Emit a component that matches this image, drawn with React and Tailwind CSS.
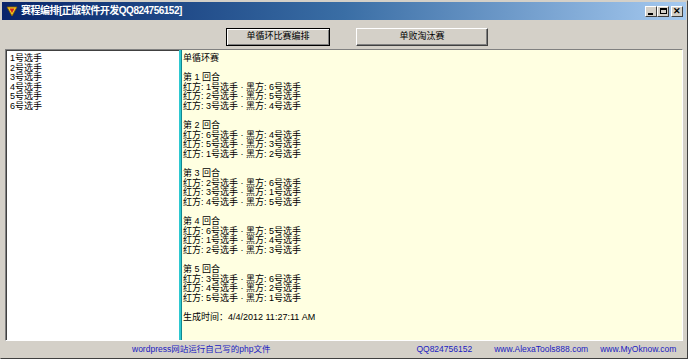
import React from 'react';

const font = { fontFamily: '"Liberation Sans", "Noto Sans CJK SC", sans-serif' };

const players = ['1号选手', '2号选手', '3号选手', '4号选手', '5号选手', '6号选手'];

const rounds = [
  [[1, 6], [2, 5], [3, 4]],
  [[6, 4], [5, 3], [1, 2]],
  [[2, 6], [3, 1], [4, 5]],
  [[6, 5], [1, 4], [2, 3]],
  [[3, 6], [4, 2], [5, 1]],
];

function CapButton({ children }) {
  return (
    <div className="w-[12px] h-[11px] bg-[#d4d0c8] border-t border-l border-white border-r border-b border-r-[#404040] border-b-[#404040] flex items-center justify-center">
      {children}
    </div>
  );
}

function App() {
  return (
    <div className="w-[688px] h-[359px] bg-[#d4d0c8] border border-[#404040] border-t-[#d4d0c8] border-l-[#d4d0c8] flex flex-col overflow-hidden" style={font}>
      {/* 标题栏 */}
      <div className="h-[18px] mx-[1px] mt-[1px] bg-gradient-to-r from-[#0a246a] via-[#3a6ea5] to-[#a6caf0] flex items-center pl-[4px] pr-[3px]">
        <svg width="12" height="12" viewBox="0 0 12 12">
          <path d="M1 2 L11 2 L6 11 Z" fill="#f5d020" stroke="#8a5a00" strokeWidth="0.8" />
          <path d="M3.5 3.5 L8.5 3.5 L6 8 Z" fill="#d02020" />
        </svg>
        <span className="ml-[3px] text-white font-bold text-[10px] leading-none tracking-[-0.5px]">赛程编排[正版软件开发QQ824756152]</span>
        <div className="flex-1" />
        <div className="flex">
          <CapButton>
            <div className="w-[5px] h-[2px] bg-black mt-[5px] -ml-[1px]" />
          </CapButton>
          <CapButton>
            <div className="w-[7px] h-[6px] border border-black border-t-2" />
          </CapButton>
          <div className="ml-[2px]">
            <CapButton>
              <span className="text-[9px] font-bold leading-none text-black">✕</span>
            </CapButton>
          </div>
        </div>
      </div>

      {/* 工具栏 */}
      <div className="h-[29px] flex items-center pt-[5px] pb-[1px]">
        <div className="w-[225px]" />
        <button className="w-[104px] h-[18px] bg-[#d4d0c8] border border-black text-[9px] leading-none text-black flex items-center justify-center shadow-[inset_1px_1px_0_#ffffff,inset_-1px_-1px_0_#808080]">
          单循环比赛编排
        </button>
        <div className="w-[26px]" />
        <button className="w-[132px] h-[18px] bg-[#d4d0c8] border border-white border-r-[#404040] border-b-[#404040] text-[9px] leading-none text-black flex items-center justify-center shadow-[inset_-1px_-1px_0_#808080]">
          单败淘汰赛
        </button>
      </div>

      {/* 主体 */}
      <div className="flex-1 flex mx-[4px] border-t border-l border-[#808080] border-r border-b border-r-white border-b-white min-h-0">
        <div className="w-[173px] bg-white border-t border-l border-[#404040] pl-[3px] pt-[3px] text-[9px] leading-[9.6px] text-black">
          {players.map(p => (
            <div key={p}>{p}</div>
          ))}
        </div>
        <div className="w-[3px] bg-[#2ec8d0] border-r border-[#108890]" />
        <div className="flex-1 bg-[#ffffe1] pl-[1px] pt-[4px] text-[9px] leading-[9.6px] text-black">
          <div>单循环赛</div>
          <div className="h-[9.6px]" />
          {rounds.map((r, i) => (
            <div key={i}>
              <div>第 {i + 1} 回合</div>
              {r.map(([a, b]) => (
                <div key={a}>红方: {a}号选手 · 黑方: {b}号选手</div>
              ))}
              <div className="h-[9.6px]" />
            </div>
          ))}
          <div>生成时间：4/4/2012 11:27:11 AM</div>
        </div>
      </div>

      {/* 状态栏 */}
      <div className="h-[17px] flex items-center text-[8.5px] leading-none text-[#2020c0]">
        <div className="w-[131px]" />
        <span>wordpress网站运行自己写的php文件</span>
        <div className="w-[146px]" />
        <span>QQ824756152</span>
        <div className="w-[22px]" />
        <span>www.AlexaTools888.com</span>
        <div className="w-[12px]" />
        <span>www.MyOknow.com</span>
      </div>
    </div>
  );
}

export default App;
